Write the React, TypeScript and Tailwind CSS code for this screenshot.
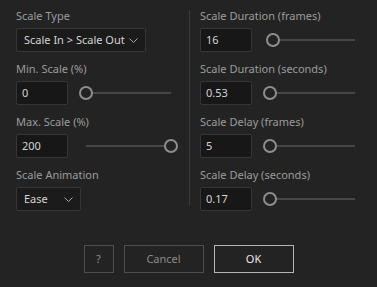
import React from 'react';

const font = { fontFamily: '"Noto Sans", "Open Sans", sans-serif' };

const Chevron = () => (
  <svg width="9" height="5" viewBox="0 0 9 5" className="text-[#a8a8a8]">
    <path d="M0.5 0.5 L4.5 4.5 L8.5 0.5" fill="none" stroke="currentColor" strokeWidth="1" />
  </svg>
);

const Slider = ({ pct }: { pct: number }) => (
  <div className="relative h-[24px] w-[99px] shrink-0">
    <div className="absolute left-[7px] right-[7px] top-[11px] h-[2px] bg-[#474747]" />
    <div
      className="absolute top-[5px] h-[14px] w-[14px] rounded-full border-2 border-[#8e8e8e] bg-[#232323]"
      style={{ left: `${(pct / 100) * 85}px` }}
    />
  </div>
);

const Label = ({ children }: { children: React.ReactNode }) => (
  <div className="mb-[4px] h-[16px] whitespace-nowrap text-[11px] leading-[16px] text-[#9c9c9c]">{children}</div>
);

const NumberField = ({ label, value, pct }: { label: string; value: string; pct: number }) => (
  <div>
    <Label>{label}</Label>
    <div className="flex items-center gap-[11px]">
      <div className="flex h-[24px] w-[52px] shrink-0 items-center rounded-[2px] border border-[#363636] bg-[#171717] pl-[5px] text-[11px] text-[#d4d4d4]">
        {value}
      </div>
      <Slider pct={pct} />
    </div>
  </div>
);

const SelectField = ({ label, value, width }: { label: string; value: string; width: string }) => (
  <div>
    <Label>{label}</Label>
    <div
      className={`flex h-[24px] items-center justify-between whitespace-nowrap rounded-[2px] border border-[#363636] bg-[#1b1b1b] pl-[7px] pr-[7px] text-[11px] text-[#d4d4d4] ${width}`}
    >
      <span>{value}</span>
      <Chevron />
    </div>
  </div>
);

export default function App() {
  return (
    <div className="flex h-[287px] w-[377px] flex-col bg-[#232323] pt-[8px]" style={font}>
      <div className="flex">
        <div className="flex w-[189px] shrink-0 flex-col gap-[9px] pl-4">
          <SelectField label="Scale Type" value="Scale In > Scale Out" width="w-[130px]" />
          <NumberField label="Min. Scale (%)" value="0" pct={0} />
          <NumberField label="Max. Scale (%)" value="200" pct={100} />
          <SelectField label="Scale Animation" value="Ease" width="w-[65px]" />
        </div>
        <div className="mt-[2px] h-[195px] w-px bg-[#3a3a3a]" />
        <div className="flex flex-col gap-[9px] pl-[10px]">
          <NumberField label="Scale Duration (frames)" value="16" pct={3.5} />
          <NumberField label="Scale Duration (seconds)" value="0.53" pct={0} />
          <NumberField label="Scale Delay (frames)" value="5" pct={0} />
          <NumberField label="Scale Delay (seconds)" value="0.17" pct={0} />
        </div>
      </div>
      <div className="mt-[34px] flex justify-center gap-[10px] text-[11px]">
        <button className="h-[28px] w-[30px] border border-[#4e4e4e] text-[#8a8a8a]">?</button>
        <button className="h-[28px] w-[80px] border border-[#4e4e4e] text-[#8a8a8a]">Cancel</button>
        <button className="h-[28px] w-[80px] border border-[#b4b4b4] text-[#e8e8e8]">OK</button>
      </div>
    </div>
  );
}
